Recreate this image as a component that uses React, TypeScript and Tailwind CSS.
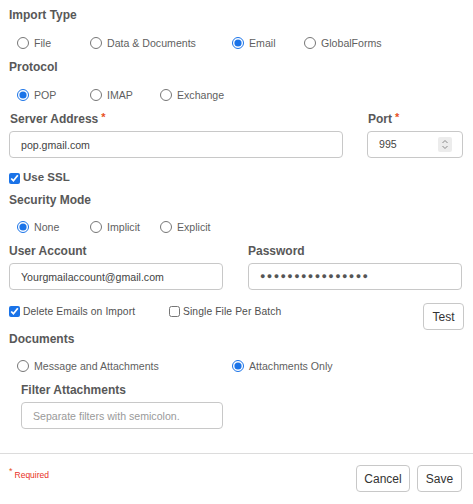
import React from 'react';

type Opt = { label: string; w: string; checked?: boolean };

const Radio = ({ label, w, checked }: Opt) => (
  <label className={`flex items-center gap-[5px] ${w}`}>
    <input
      type="radio"
      readOnly
      checked={!!checked}
      className="m-0 w-[12px] h-[12px] accent-[#1a73e8]"
    />
    <span className="text-[10.6px] leading-[14px] text-[#5f5f5f]">{label}</span>
  </label>
);

const RadioRow = ({ opts, h }: { opts: Opt[]; h: string }) => (
  <div className={`flex items-center pl-[8px] ${h}`}>
    {opts.map((o) => (
      <Radio key={o.label} {...o} />
    ))}
  </div>
);

const Heading = ({ children, h }: { children: React.ReactNode; h: string }) => (
  <div className={`flex items-center text-[12px] font-bold text-[#585858] ${h}`}>{children}</div>
);

const Star = () => <span className="ml-[3px] text-[#e8501e] text-[11px] relative -top-[2px]">*</span>;

const inputCls =
  'h-[27px] rounded-[4px] border border-[#c8c8c8] bg-white px-[11px] text-[10.6px] text-[#444] outline-none';

export default function App() {
  return (
    <div
      className="w-[473px] h-[504px] bg-white text-[#555] overflow-hidden"
      style={{ fontFamily: '"Liberation Sans", Arial, sans-serif' }}
    >
      <div className="px-[9px]">
        <Heading h="h-[30px]">Import Type</Heading>
        <RadioRow
          h="h-[26px]"
          opts={[
            { label: 'File', w: 'w-[73px]' },
            { label: 'Data & Documents', w: 'w-[142px]' },
            { label: 'Email', w: 'w-[72px]', checked: true },
            { label: 'GlobalForms', w: 'w-[100px]' },
          ]}
        />
        <Heading h="h-[22px]">Protocol</Heading>
        <RadioRow
          h="h-[34px]"
          opts={[
            { label: 'POP', w: 'w-[73px]', checked: true },
            { label: 'IMAP', w: 'w-[70px]' },
            { label: 'Exchange', w: 'w-[100px]' },
          ]}
        />

        <div className="flex gap-[24px]">
          <div className="flex flex-col w-[334px]">
            <Heading h="h-[14px]">
              <span className="pl-[1px]">Server Address</span>
              <Star />
            </Heading>
            <input readOnly defaultValue="pop.gmail.com" className={`mt-[5px] ${inputCls}`} />
          </div>
          <div className="flex flex-col w-[96px]">
            <Heading h="h-[14px]">
              <span className="pl-[1px]">Port</span>
              <Star />
            </Heading>
            <div className={`mt-[5px] flex items-center justify-between ${inputCls}`}>
              <span>995</span>
              <span className="flex items-center justify-center w-[14px] h-[15px] bg-[#ececec] rounded-[2px] -mr-[1px]">
                <svg width="8" height="11" viewBox="0 0 8 11" fill="none" stroke="#8a8a8a" strokeWidth="1">
                  <path d="M1.5 4 L4 1.5 L6.5 4" />
                  <path d="M1.5 7 L4 9.5 L6.5 7" />
                </svg>
              </span>
            </div>
          </div>
        </div>

        <label className="mt-[10px] h-[20px] flex items-center gap-[3px]">
          <input type="checkbox" readOnly checked className="m-0 w-[11px] h-[11px] accent-[#1a73e8]" />
          <span className="text-[11.5px] font-bold text-[#585858]">Use SSL</span>
        </label>
        <Heading h="h-[21px] pt-[2px]">Security Mode</Heading>
        <RadioRow
          h="h-[36px]"
          opts={[
            { label: 'None', w: 'w-[73px]', checked: true },
            { label: 'Implicit', w: 'w-[70px]' },
            { label: 'Explicit', w: 'w-[100px]' },
          ]}
        />

        <div className="flex gap-[25px]">
          <div className="flex flex-col w-[214px]">
            <Heading h="h-[12px]">User Account</Heading>
            <input readOnly defaultValue="Yourgmailaccount@gmail.com" className={`mt-[6px] ${inputCls}`} />
          </div>
          <div className="flex flex-col w-[214px]">
            <Heading h="h-[12px]">Password</Heading>
            <div className={`mt-[6px] flex items-center ${inputCls}`}>
              <span className="text-[9px] tracking-[1.4px] text-[#555]">●●●●●●●●●●●●●●●●</span>
            </div>
          </div>
        </div>

        <div className="mt-[13px] h-[26px] flex items-start justify-between">
          <div className="flex items-center pt-[1px]">
            <label className="flex items-center gap-[3px] w-[160px]">
              <input type="checkbox" readOnly checked className="m-0 w-[11px] h-[11px] accent-[#1a73e8]" />
              <span className="text-[10.3px] text-[#505050] tracking-[0.1px]">Delete Emails on Import</span>
            </label>
            <label className="flex items-center gap-[3px]">
              <input type="checkbox" readOnly className="m-0 w-[11px] h-[11px] accent-[#1a73e8]" />
              <span className="text-[10.3px] text-[#505050] tracking-[0.1px]">Single File Per Batch</span>
            </label>
          </div>
          <button className="w-[41px] h-[27px] rounded-[4px] border border-[#c8c8c8] bg-white text-[12px] text-[#333]">
            Test
          </button>
        </div>

        <Heading h="h-[20px]">Documents</Heading>
        <RadioRow
          h="h-[34px]"
          opts={[
            { label: 'Message and Attachments', w: 'w-[215px]' },
            { label: 'Attachments Only', w: 'w-[120px]', checked: true },
          ]}
        />
        <div className="pl-[12px] flex flex-col w-[214px]">
          <Heading h="h-[14px]">Filter Attachments</Heading>
          <input
            readOnly
            placeholder="Separate filters with semicolon."
            className={`mt-[5px] ${inputCls} placeholder:text-[#9a9a9a]`}
          />
        </div>
      </div>

      <div className="mt-[24px] border-t border-[#dcdcdc]" />

      <div className="px-[9px] pt-[11px] flex items-start justify-between">
        <div className="flex items-start pt-[2px]">
          <span className="text-[#e8501e] text-[9px] leading-[9px]">*</span>
          <span className="ml-[2px] text-[#e8301e] text-[8.5px] leading-[12px] pt-[2px]">Required</span>
        </div>
        <div className="flex gap-[7px] pr-[2px]">
          <button className="w-[54px] h-[27px] rounded-[4px] border border-[#c8c8c8] bg-white text-[12px] text-[#333]">
            Cancel
          </button>
          <button className="w-[45px] h-[27px] rounded-[4px] border border-[#c8c8c8] bg-white text-[12px] text-[#333]">
            Save
          </button>
        </div>
      </div>
    </div>
  );
}
